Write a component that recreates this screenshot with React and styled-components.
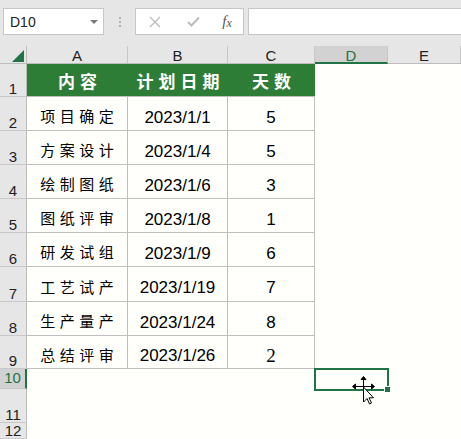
import React from 'react';
import styled, { createGlobalStyle, css } from 'styled-components';

const Global = createGlobalStyle`
  html, body { margin: 0; padding: 0; }
  body {
    width: 461px; height: 439px; overflow: hidden; background: #e6e6e6;
    font-family: "Liberation Sans", Arial, sans-serif;
  }
`;

const GREEN = '#217346';
const GRID = '#bfbfbf';

const Window = styled.div`
  position: relative;
  width: 461px; height: 439px;
  display: flex; flex-direction: column;
  background: #e6e6e6; overflow: hidden;
`;

const FormulaBar = styled.div`
  flex: none; height: 46px; box-sizing: border-box;
  display: flex; align-items: flex-start;
  padding: 8px 0 0 3px;
`;

const NameBox = styled.div`
  position: relative; box-sizing: border-box;
  width: 101px; height: 27px;
  background: #fff; border: 1px solid #c6c6c6;
  display: flex; align-items: center; padding-left: 6px;
  font-size: 14px; color: #222;
`;

const Caret = styled.span`
  position: absolute; right: 5px; top: 11px;
  border-left: 4px solid transparent; border-right: 4px solid transparent;
  border-top: 4px solid #7a7a7a;
`;

const Grip = styled.div`
  width: 31px; height: 27px;
  display: flex; flex-direction: column; align-items: center; justify-content: center; gap: 2px;
`;

const GripDot = styled.span`
  width: 2px; height: 2px; background: #b3b3b3;
`;

const FxGroup = styled.div`
  box-sizing: border-box; width: 109px; height: 27px;
  background: #fff; border: 1px solid #c6c6c6;
  display: grid; grid-template-columns: 38px 38px 30px;
  align-items: center; justify-items: center;
`;

const Fx = styled.span`
  font-family: "Liberation Serif", serif; font-style: italic;
  font-size: 15px; color: #555; line-height: 1;
`;

const FxSub = styled.span`
  font-size: 12px; position: relative; top: 1px;
`;

const FormulaInput = styled.div`
  flex: 1; margin-left: 4px; height: 27px; box-sizing: border-box;
  background: #fff; border: 1px solid #c6c6c6; border-right: none;
`;

const Sheet = styled.div`
  flex: 1; display: grid;
  grid-template-columns: 27px 101px 100px 87px 73px 1fr;
  grid-template-rows: 18px 33px 34px 34px 34px 34px 34px 35px 34px 33px 20px 34px 1fr;
  background: #fffffb;
`;

const Corner = styled.div`
  position: relative; box-sizing: border-box;
  background: #e6e6e6;
  border-right: 1px solid #bdbdbd; border-bottom: 1px solid #bdbdbd;
  &::after {
    content: ''; position: absolute; right: 2px; bottom: 1px;
    width: 12px; height: 12px; background: ${GREEN};
    clip-path: polygon(100% 0, 100% 100%, 0 100%);
  }
`;

const ColHeader = styled.div`
  box-sizing: border-box;
  background: #e6e6e6; color: #222;
  border-right: 1px solid #c6c6c6; border-bottom: 1px solid #bdbdbd;
  display: flex; justify-content: center; align-items: center;
  padding-top: 2px; font-size: 15px; line-height: 15px;
  ${p => p.$active && css`
    background: #d2d2d2; color: ${GREEN};
    border-bottom: 2px solid ${GREEN};
    padding-top: 3px;
  `}
`;

const RowHeader = styled.div`
  box-sizing: border-box;
  background: #e6e6e6; color: #222;
  border-right: 1px solid #bdbdbd; border-bottom: 1px solid #c8c8c8;
  display: flex; justify-content: center;
  align-items: ${p => (p.$top ? 'flex-start' : 'flex-end')};
  padding-top: ${p => (p.$top ? '2px' : '0')};
  font-size: 15px; line-height: 14px;
  ${p => p.$active && css`
    background: #d2d2d2; color: ${GREEN};
    border-right: 2px solid ${GREEN};
  `}
`;

const HeadCell = styled.div`
  box-sizing: border-box;
  background: #2e7d37; color: #fff;
  border-bottom: 1px solid ${GRID};
  display: flex; justify-content: center; align-items: center;
  font-family: "Noto Sans CJK SC", sans-serif; font-weight: 700;
  font-size: 17px; letter-spacing: 5px; padding-left: 5px;
`;

const DataCell = styled.div`
  box-sizing: border-box;
  border-right: 1px solid ${GRID}; border-bottom: 1px solid ${GRID};
  display: flex; justify-content: center; align-items: center;
  color: #000;
  ${p => p.$kind === 'zh' ? css`
    font-family: "Noto Sans CJK SC", sans-serif;
    font-size: 15px; letter-spacing: 4.5px; padding: 4px 0 0 4.5px;
  ` : p.$serif ? css`
    font-family: "Liberation Serif", serif;
    font-size: 19px; padding-top: 7px;
  ` : css`
    font-family: "Liberation Sans", Arial, sans-serif;
    font-size: 17px; padding-top: 8px;
  `}
`;

const EmptyCell = styled.div`
  position: relative;
  ${p => p.$selected && css`
    &::before {
      content: ''; position: absolute; left: -1px; top: -1px; right: -1px; bottom: -2px;
      border: 2px solid ${GREEN};
    }
    &::after {
      content: ''; position: absolute; right: -3px; bottom: -4px;
      width: 5px; height: 5px; background: ${GREEN};
      border: 1px solid #fffffb;
    }
  `}
`;

const Cursor = styled.svg`
  position: absolute; left: 352px; top: 376px;
  width: 24px; height: 30px; overflow: visible;
`;

const rows = [
  ['项目确定', '2023/1/1', '5'],
  ['方案设计', '2023/1/4', '5'],
  ['绘制图纸', '2023/1/6', '3'],
  ['图纸评审', '2023/1/8', '1'],
  ['研发试组', '2023/1/9', '6'],
  ['工艺试产', '2023/1/19', '7'],
  ['生产量产', '2023/1/24', '8'],
  ['总结评审', '2023/1/26', '2'],
];

const cols = ['A', 'B', 'C', 'D', 'E'];

export default function App() {
  const cells = [];
  cells.push(<Corner key="corner" />);
  cols.forEach(c => cells.push(<ColHeader key={'h' + c} $active={c === 'D'}>{c}</ColHeader>));

  cells.push(<RowHeader key="r1">1</RowHeader>);
  ['内容', '计划日期', '天数'].forEach(t => cells.push(<HeadCell key={'t' + t}>{t}</HeadCell>));
  cells.push(<EmptyCell key="1d" />, <EmptyCell key="1e" />);

  rows.forEach((r, i) => {
    const n = i + 2;
    cells.push(<RowHeader key={'r' + n}>{n}</RowHeader>);
    cells.push(<DataCell key={n + 'a'} $kind="zh">{r[0]}</DataCell>);
    cells.push(<DataCell key={n + 'b'} $kind="num">{r[1]}</DataCell>);
    cells.push(<DataCell key={n + 'c'} $kind="num" $serif={n === 9}>{r[2]}</DataCell>);
    cells.push(<EmptyCell key={n + 'd'} />, <EmptyCell key={n + 'e'} />);
  });

  [10, 11, 12].forEach(n => {
    cells.push(<RowHeader key={'r' + n} $active={n === 10} $top={n === 10}>{n}</RowHeader>);
    cols.forEach(c => cells.push(<EmptyCell key={n + c} $selected={n === 10 && c === 'D'} />));
  });

  return (
    <Window>
      <Global />
      <FormulaBar>
        <NameBox>D10<Caret /></NameBox>
        <Grip><GripDot /><GripDot /><GripDot /></Grip>
        <FxGroup>
          <svg width="12" height="12" viewBox="0 0 12 12">
            <path d="M1 1 L11 11 M11 1 L1 11" stroke="#bdbdbd" strokeWidth="1.4" fill="none" />
          </svg>
          <svg width="13" height="11" viewBox="0 0 13 11">
            <path d="M1 6 L4.5 9.5 L12 1.5" stroke="#bdbdbd" strokeWidth="2" fill="none" />
          </svg>
          <Fx>f<FxSub>x</FxSub></Fx>
        </FxGroup>
        <FormulaInput />
      </FormulaBar>
      <Sheet>{cells}</Sheet>
      <Cursor viewBox="0 0 24 30">
        <g stroke="#000" strokeWidth="1" fill="#000">
          <line x1="11.5" y1="3" x2="11.5" y2="17" />
          <line x1="3" y1="10.5" x2="20" y2="10.5" />
          <polygon points="11.5,0.5 9,3.5 14,3.5" />
          <polygon points="0.5,10.5 3.5,8 3.5,13" />
          <polygon points="22.5,10.5 19.5,8 19.5,13" />
        </g>
        <path
          d="M11.5 11 L11.5 26 L15 22.5 L17.5 28 L19.5 27 L17 21.8 L21.5 21.8 Z"
          fill="#fff" stroke="#000" strokeWidth="1" strokeLinejoin="miter"
        />
      </Cursor>
    </Window>
  );
}
